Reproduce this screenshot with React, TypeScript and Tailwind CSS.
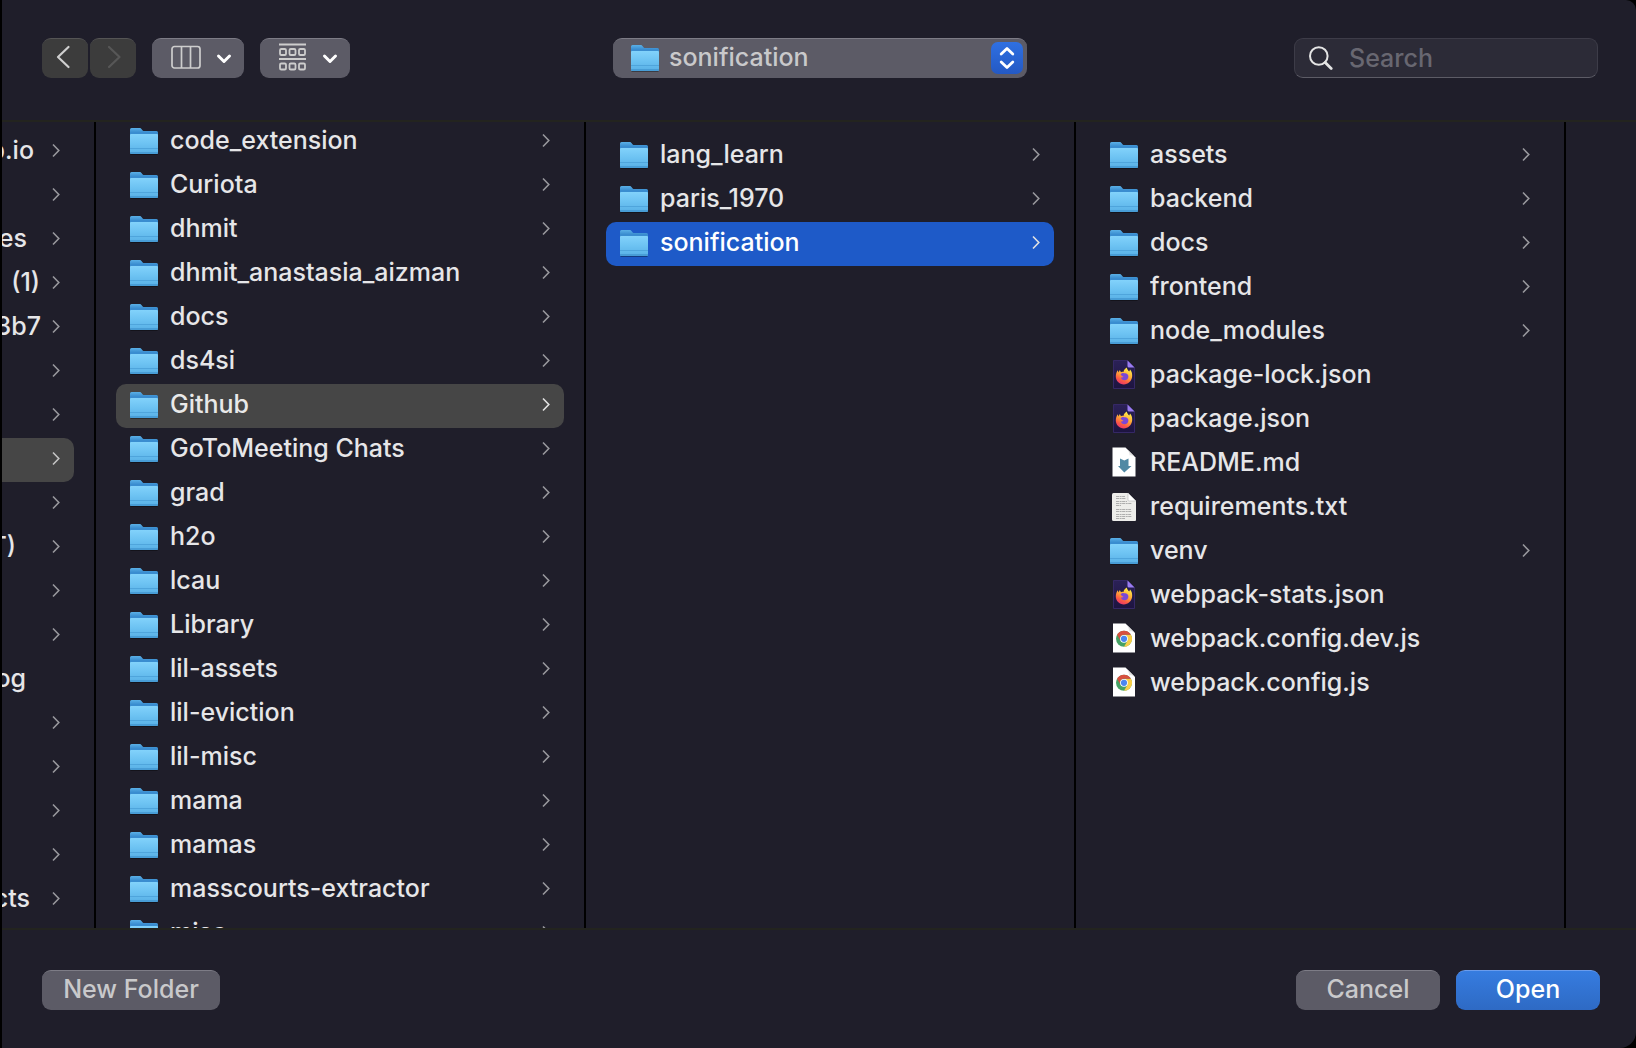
import type { ReactNode } from "react";

type Kind = "folder" | "firefox" | "markdown" | "text" | "chrome";
type Entry = { name: string; kind?: Kind; selected?: "active" | "path" };

const parentRows: { name: string; end: number; leaf?: boolean; selected?: boolean }[] = [
  { name: "b.io", end: 32 },
  { name: "", end: 0 },
  { name: "es", end: 25 },
  { name: "(1)", end: 38 },
  { name: "3b7", end: 39 },
  { name: "", end: 0 },
  { name: "", end: 0 },
  { name: "", end: 0, selected: true },
  { name: "", end: 0 },
  { name: "T)", end: 14 },
  { name: "", end: 0 },
  { name: "", end: 0 },
  { name: "og", end: 24, leaf: true },
  { name: "", end: 0 },
  { name: "", end: 0 },
  { name: "", end: 0 },
  { name: "", end: 0 },
  { name: "cts", end: 28 },
];

const documents: Entry[] = [
  { name: "code_extension" },
  { name: "Curiota" },
  { name: "dhmit" },
  { name: "dhmit_anastasia_aizman" },
  { name: "docs" },
  { name: "ds4si" },
  { name: "Github", selected: "path" },
  { name: "GoToMeeting Chats" },
  { name: "grad" },
  { name: "h2o" },
  { name: "lcau" },
  { name: "Library" },
  { name: "lil-assets" },
  { name: "lil-eviction" },
  { name: "lil-misc" },
  { name: "mama" },
  { name: "mamas" },
  { name: "masscourts-extractor" },
  { name: "misc" },
];

const github: Entry[] = [
  { name: "lang_learn" },
  { name: "paris_1970" },
  { name: "sonification", selected: "active" },
];

const project: Entry[] = [
  { name: "assets" },
  { name: "backend" },
  { name: "docs" },
  { name: "frontend" },
  { name: "node_modules" },
  { name: "package-lock.json", kind: "firefox" },
  { name: "package.json", kind: "firefox" },
  { name: "README.md", kind: "markdown" },
  { name: "requirements.txt", kind: "text" },
  { name: "venv" },
  { name: "webpack-stats.json", kind: "firefox" },
  { name: "webpack.config.dev.js", kind: "chrome" },
  { name: "webpack.config.js", kind: "chrome" },
];

function Gradients() {
  return (
    <svg className="absolute size-0" aria-hidden="true">
      <defs>
        <linearGradient id="folderFront" x1="0" y1="0" x2="0" y2="1">
          <stop offset="0" stopColor="#82d2fb" />
          <stop offset="0.5" stopColor="#6cc2f2" />
          <stop offset="1" stopColor="#58b0e6" />
        </linearGradient>
        <linearGradient id="folderBack" x1="0" y1="0" x2="0" y2="1">
          <stop offset="0" stopColor="#5ab0e6" />
          <stop offset="0.3" stopColor="#3a8dd0" />
        </linearGradient>
        <linearGradient id="foxPage" x1="0" y1="0" x2="0" y2="1">
          <stop offset="0" stopColor="#2b2157" />
          <stop offset="1" stopColor="#1d1440" />
        </linearGradient>
        <linearGradient id="foxFlame" x1="0.75" y1="0.05" x2="0.3" y2="1">
          <stop offset="0" stopColor="#fff04a" />
          <stop offset="0.45" stopColor="#ffa436" />
          <stop offset="0.75" stopColor="#fb5a45" />
          <stop offset="1" stopColor="#e9336f" />
        </linearGradient>
        <linearGradient id="curl" x1="0" y1="1" x2="1" y2="0">
          <stop offset="0" stopColor="#ffffff" />
          <stop offset="1" stopColor="#bdbdbd" />
        </linearGradient>
      </defs>
    </svg>
  );
}

function FolderIcon() {
  return (
    <svg className="h-7 w-7 shrink-0" viewBox="0 0 28 28" aria-hidden="true">
      <path d="M0.5 26h27v1h-27z" fill="#000" opacity="0.35" />
      <path d="M0 1.500A1.500 1.500 0 0 1 1.500 0h8c1 0 1.500.4 2.200 1.200.7.900 1.300 1.800 2.500 1.800H26.500A1.500 1.500 0 0 1 28 4.500v10H0z" fill="url(#folderBack)" />
      <path d="M0 7a1 1 0 0 1 1-1h26a1 1 0 0 1 1 1V24.500a1.500 1.500 0 0 1-1.500 1.500h-25A1.500 1.500 0 0 1 0 24.500z" fill="url(#folderFront)" />
      <path d="M0 20h28v1H0z" fill="#4fa5dc" />
      <path d="M0 24h28v.5a1.500 1.500 0 0 1-1.500 1.500h-25A1.500 1.500 0 0 1 0 24.500z" fill="#489dd6" />
    </svg>
  );
}

function FirefoxIcon() {
  return (
    <svg className="mb-1 h-[30px] w-7 shrink-0" viewBox="0 0 28 30" aria-hidden="true">
      <path d="M3.500 1.500h14l7 7v21h-21z" fill="url(#foxPage)" stroke="#352865" />
      <path d="M17.500 1.500l7 7h-5.500a1.500 1.500 0 0 1-1.500-1.500z" fill="#9a7cf0" />
      <path d="M16.800 8.500c.2 1.900 1.400 2.800 2.400 4 .5-.6.700-1.200.8-2 1.800 1.800 2.500 4.600 2.100 7.600-.7 4.300-4.100 7.400-8.300 7.400-4.500 0-8-3.500-8-7.900 0-2.700.8-4.600 2-6.300l.7 2.100 1.300-2.300 1.200 2.100c.8-.3 1.700-.4 2.500-.3.300-1.800 1.300-3.300 3.300-4.400z" fill="url(#foxFlame)" />
      <path d="M10.600 15.600c.7-1.300 2.200-1.800 3.400-1.300 2.400-.7 4.400.9 4.400 3.200s-1.700 3.700-3.800 3.700c-2 0-3.600-1.300-3.600-3 .9.4 1.900.2 2.600-.5-1.200 0-1.900-.7-3-2.100z" fill="#7a47d8" />
    </svg>
  );
}

function MarkdownIcon() {
  return (
    <svg className="mb-1 h-[30px] w-7 shrink-0" viewBox="0 0 28 30" aria-hidden="true">
      <path d="M2.500 0.500H15.500L25.500 10.500V29.500H2.500z" fill="#fff" />
      <path d="M15.500 0.500L25.500 10.500c-2-2-4-2.500-6-2 .2-3-1.500-6-4-8z" fill="url(#curl)" />
      <path d="M10 11.500l4.300 2 4.200-2v7.500h3L14.300 25.500 8 19h2z" fill="#5189a4" />
    </svg>
  );
}

function TextIcon() {
  return (
    <svg className="mb-1 h-[30px] w-7 shrink-0" viewBox="0 0 28 30" aria-hidden="true">
      <path d="M3.500 2h14.500l8 8v19a1 1 0 0 1-1 1H3.500a1.500 1.500 0 0 1-1.500-1.500v-25A1.500 1.500 0 0 1 3.500 2z" fill="#ededea" />
      <path d="M18 2l8 8h-7a1 1 0 0 1-1-1z" fill="#fff" stroke="#b5b5b5" strokeWidth="0.6" />
      <path d="M6 5.500h9M6 7.500h10M6 10.500h11M6 12.500h16M6 14.500h5M6 18.500h15M6 20.500h16M6 23.500h15M6 25.500h16M6 27.500h9" stroke="#a6a6a6" strokeWidth="0.9" strokeDasharray="3 0.6 2 0.500" fill="none" />
    </svg>
  );
}

function ChromeIcon() {
  return (
    <svg className="mb-1 h-[30px] w-7 shrink-0" viewBox="0 0 28 30" aria-hidden="true">
      <path d="M3 0.500H15.500L25 10V29.500H3z" fill="#fff" />
      <path d="M15.500 0.500L25 10c-2-1.700-4-2-6-1.500.2-3-1-6-3.500-8z" fill="url(#curl)" />
      <circle cx="14" cy="15.800" r="8" fill="#45a164" />
      <path d="M17.500 17.800L14 23.800A8 8 0 0 0 20.930 11.800H14z" fill="#f9ce48" />
      <path d="M7.070 11.800A8 8 0 0 1 20.930 11.800H14a4 4 0 0 0-3.500 6z" fill="#d8503f" />
      <circle cx="14" cy="15.800" r="3.900" fill="#fff" />
      <circle cx="14" cy="15.800" r="3.100" fill="#4a86f0" />
    </svg>
  );
}

function EntryIcon({ kind = "folder" }: { kind?: Kind }) {
  if (kind === "firefox") return <FirefoxIcon />;
  if (kind === "markdown") return <MarkdownIcon />;
  if (kind === "text") return <TextIcon />;
  if (kind === "chrome") return <ChromeIcon />;
  return <FolderIcon />;
}

function RowChevron({ className }: { className: string }) {
  return (
    <svg className={`mb-0.5 h-4 w-2 shrink-0 ${className}`} viewBox="0 0 8 16" fill="none" stroke="currentColor" strokeWidth="1.600" aria-hidden="true">
      <path d="M1 1.500l5.800 6L1 13.500" />
    </svg>
  );
}

function Column({ entries, label, className }: { entries: Entry[]; label: string; className: string }) {
  return (
    <ul aria-label={label} className={`w-[490px] shrink-0 overflow-hidden border-r-2 border-black px-5 ${className}`}>
      {entries.map((entry) => {
        const tone =
          entry.selected === "active"
            ? "bg-[#1e5ac8] text-white"
            : entry.selected === "path"
              ? "bg-[#464646] text-[#e9e9e9]"
              : "text-[#e6e6e8]";
        return (
          <li key={entry.name}>
            <button type="button" className={`flex h-11 w-full items-center gap-3 rounded-[10px] px-3.5 text-left ${tone}`}>
              <EntryIcon kind={entry.kind} />
              <span className="grow truncate pb-1 leading-8">{entry.name}</span>
              {(entry.kind ?? "folder") === "folder" && (
                <RowChevron className={entry.selected ? "text-[#e2e2e2]" : "text-[#98989d]"} />
              )}
            </button>
          </li>
        );
      })}
    </ul>
  );
}

function ParentColumn() {
  return (
    <ul aria-label="Home" className="w-[94px] shrink-0 overflow-hidden border-r-2 border-black pt-2 pr-5">
      {parentRows.map((row, index) => (
        <li key={index}>
          <button
            type="button"
            aria-label={row.name || "Folder"}
            className={`flex h-11 w-full items-center justify-between rounded-r-[10px] pr-3.5 text-[#e6e6e8] ${row.selected ? "bg-[#464646]" : ""}`}
          >
            <span className="flex justify-end overflow-hidden pb-1 leading-8 whitespace-nowrap" style={{ width: row.end }}>
              {row.name}
            </span>
            {!row.leaf && <RowChevron className={row.selected ? "text-[#c4c4c4]" : "text-[#98989d]"} />}
          </button>
        </li>
      ))}
    </ul>
  );
}

function ToolButton({ label, className, children }: { label: string; className: string; children: ReactNode }) {
  return (
    <button type="button" aria-label={label} className={`flex h-10 items-center rounded-[9px] border-t ${className}`}>
      {children}
    </button>
  );
}

function DownChevron() {
  return (
    <svg className="h-3 w-4" viewBox="0 0 16 12" fill="none" stroke="#fff" strokeWidth="3" strokeLinecap="round" strokeLinejoin="round" aria-hidden="true">
      <path d="M2.500 3L8 8.500 13.500 3" />
    </svg>
  );
}

function Toolbar() {
  return (
    <header className="grid h-[122px] shrink-0 grid-cols-[1fr_auto_1fr] items-start border-b-2 border-[#23241f] pt-[38px] pr-[38px] pl-10">
      <div className="flex">
        <ToolButton label="Back" className="mr-0.5 w-[46px] justify-center border-[#555] bg-[#3c3c3c]">
          <svg className="mr-1 mb-1 h-6 w-4" viewBox="0 0 16 24" fill="none" stroke="#cfcfcf" strokeWidth="2.200" strokeLinecap="round" strokeLinejoin="round" aria-hidden="true">
            <path d="M13.500 2L3 12l10.500 10" />
          </svg>
        </ToolButton>
        <ToolButton label="Forward" className="mr-4 w-[46px] justify-center border-[#555] bg-[#3c3c3c]">
          <svg className="mb-1 ml-1 h-6 w-4" viewBox="0 0 16 24" fill="none" stroke="#575757" strokeWidth="2.200" strokeLinecap="round" strokeLinejoin="round" aria-hidden="true">
            <path d="M2 2l10.500 10L2 22" />
          </svg>
        </ToolButton>
        <ToolButton label="Column view" className="mr-4 w-[92px] justify-between border-[#7d7c86] bg-[#5c5b66] pr-3 pl-[19px]">
          <svg className="mb-1 h-6 w-[30px]" viewBox="0 0 30 24" fill="none" stroke="#cdcdcd" strokeWidth="1.700" aria-hidden="true">
            <rect x="1" y="1.500" width="28" height="21.500" rx="2.500" />
            <path d="M10.500 1.500v21.500M19.500 1.500v21.500" />
          </svg>
          <DownChevron />
        </ToolButton>
        <ToolButton label="Group items" className="w-[90px] justify-between border-[#7d7c86] bg-[#5c5b66] pr-3 pl-[19px]">
          <svg className="mb-1 h-7 w-[27px]" viewBox="0 0 27 28" fill="none" stroke="#cdcdcd" strokeWidth="1.800" aria-hidden="true">
            <path d="M0 1.500h27M0 16h27" />
            <rect x="1" y="6" width="6" height="6" rx="1.300" />
            <rect x="10.500" y="6" width="6" height="6" rx="1.300" />
            <rect x="20" y="6" width="6" height="6" rx="1.300" />
            <rect x="1" y="20.500" width="6" height="6" rx="1.300" />
            <rect x="10.500" y="20.500" width="6" height="6" rx="1.300" />
            <rect x="20" y="20.500" width="6" height="6" rx="1.300" />
          </svg>
          <DownChevron />
        </ToolButton>
      </div>

      <div className="relative w-[414px]">
        <select
          aria-label="Current folder"
          className="block h-10 w-full appearance-none rounded-[9px] border-t border-[#7d7c86] bg-[#5c5b66] pr-12 pb-1 pl-14 text-[#c9c9cb] outline-none"
        >
          <option>sonification</option>
        </select>
        <span className="pointer-events-none absolute top-[7px] left-[18px]">
          <FolderIcon />
        </span>
        <span className="pointer-events-none absolute top-1 right-1 flex size-8 items-center justify-center rounded-[7px] bg-linear-to-b from-[#2f70e2] to-[#2459c4]">
          <svg className="h-6 w-4" viewBox="0 0 16 24" fill="none" stroke="#fff" strokeWidth="2.800" strokeLinecap="round" strokeLinejoin="round" aria-hidden="true">
            <path d="M2.200 8L8 2.500 13.800 8M2.200 16L8 21.500 13.800 16" />
          </svg>
        </span>
      </div>

      <label className="flex h-10 w-[304px] items-center gap-4 justify-self-end rounded-[9px] border border-[#3d3c48] border-b-[#5d5c66] bg-[#2c2b37] pl-3.5">
        <svg className="size-6 shrink-0" viewBox="0 0 24 24" fill="none" stroke="#e4e4e4" strokeLinecap="round" aria-hidden="true">
          <circle cx="9.800" cy="10" r="8.800" strokeWidth="2" />
          <path d="M16.200 16.500l6 6" strokeWidth="2.800" />
        </svg>
        <input type="search" aria-label="Search" placeholder="Search" className="w-0 grow bg-transparent pt-0.5 outline-none placeholder:text-[#686771]" />
      </label>
    </header>
  );
}

function Footer() {
  return (
    <footer className="flex h-[120px] shrink-0 items-start gap-4 border-t-2 border-[#23241f] pt-10 pr-9 pl-10">
      <button type="button" className="mr-auto h-10 w-[178px] rounded-[9px] border-t border-[#7d7c86] bg-[#5c5b66] pb-1 text-[#c9c9cb]">
        New Folder
      </button>
      <button type="button" className="h-10 w-36 rounded-[9px] border-t border-[#7d7c86] bg-[#5c5b66] pb-1 text-[#c9c9cb]">
        Cancel
      </button>
      <button type="button" className="h-10 w-36 rounded-[9px] border-t border-[#6b9cec] bg-linear-to-b from-[#367ce0] to-[#2e6ac4] pb-1 text-white">
        Open
      </button>
    </footer>
  );
}

export default function App() {
  return (
    <div className="h-screen overflow-hidden bg-black pl-0.5 font-['Inter',sans-serif] text-[25px] font-medium">
      <Gradients />
      <main className="flex h-full flex-col overflow-hidden rounded-tr-[10px] rounded-br-2xl bg-[#1f1e2a]">
        <Toolbar />
        <div className="flex min-h-0 grow overflow-hidden">
          <ParentColumn />
          <Column label="Documents" entries={documents} className="[&>li:first-child]:-mt-0.5" />
          <Column label="Github" entries={github} className="pt-3" />
          <Column label="sonification" entries={project} className="pt-3" />
        </div>
        <Footer />
      </main>
    </div>
  );
}
